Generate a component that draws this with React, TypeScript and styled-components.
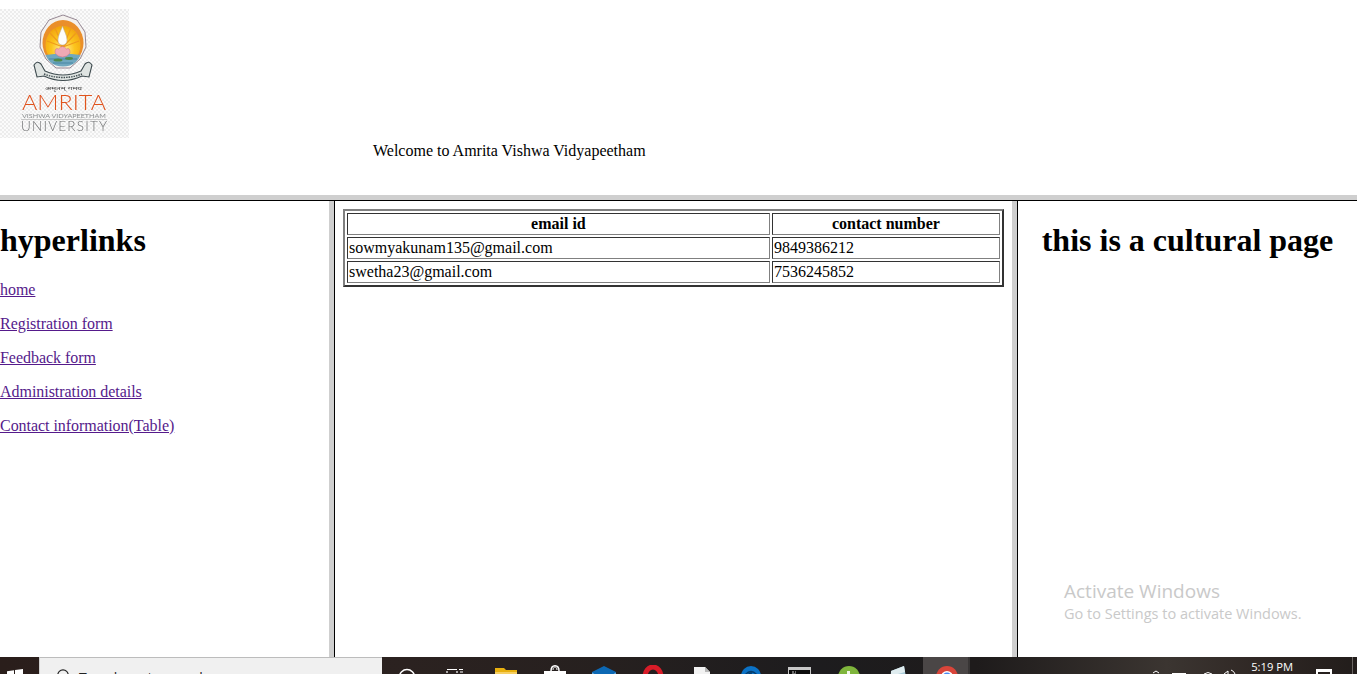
import React from 'react'
import styled, { createGlobalStyle } from 'styled-components'

const GlobalStyle = createGlobalStyle`
  html, body {
    margin: 0;
    height: 100%;
    overflow: hidden;
    background: #fff;
  }
  body {
    font-family: "Liberation Serif", "Times New Roman", serif;
    font-size: 16px;
    color: #000;
  }
`

const Page = styled.div`
  position: relative;
  display: flex;
  flex-direction: column;
  height: 674px;
  overflow: hidden;
`

const TopFrame = styled.header`
  height: 195px;
  padding-top: 9px;
  box-sizing: border-box;
  flex: none;
`

const Logo = styled.svg`
  display: block;
  width: 129px;
  height: 129px;
`

const Welcome = styled.div`
  margin-top: 4px;
  padding-left: 373px;
  line-height: 18px;
`

const HorizontalSplit = styled.div`
  flex: none;
  height: 5px;
  background: #cfcfcf;
  border-bottom: 1px solid #000;
`

const Frames = styled.div`
  flex: 1;
  min-height: 0;
  display: flex;
`

const LeftFrame = styled.nav`
  width: 329px;
  flex: none;
`

const CenterFrame = styled.main`
  flex: 1;
  min-width: 0;
  padding: 8px;
`

const RightFrame = styled.aside`
  width: 339px;
  flex: none;
  text-align: center;
`

const VerticalSplit = styled.div`
  flex: none;
  width: 5px;
  background: #cfcfcf;
  border-right: 1px solid #000;
`

const Heading = styled.h1`
  margin: 21.44px 0;
  font-size: 32px;
  line-height: 37px;
  font-weight: bold;
`

const LinkRow = styled.p`
  margin: 16px 0;
  line-height: 18px;
`

const PageLink = styled.a`
  color: #551a8b;
  text-decoration: underline;
  letter-spacing: -0.04px;
`

const ContactTable = styled.table`
  width: 100%;
  border-collapse: separate;
  border-spacing: 2px;
  border-style: solid;
  border-width: 2px;
  border-color: #808080 #333 #333 #808080;
`

const Cell = styled.td`
  padding: 1px;
  line-height: 18px;
  border-style: solid;
  border-width: 1px;
  border-color: #333 #808080 #808080 #333;
`

const HeadCell = styled(Cell).attrs({ as: 'th' })`
  font-weight: bold;
  text-align: center;
`

const Watermark = styled.div`
  position: absolute;
  left: 1064px;
  top: 579px;
  color: #c9c9c9;
  font-family: "Open Sans", "Noto Sans", sans-serif;
  pointer-events: none;
`

const WatermarkTitle = styled.div`
  font-size: 19px;
  line-height: 25px;
`

const WatermarkLine = styled.div`
  font-size: 14.5px;
  line-height: 20px;
`

const Taskbar = styled.footer`
  flex: none;
  height: 17px;
  display: flex;
  overflow: hidden;
  background: linear-gradient(90deg, #2a1e1b 0%, #2b2220 30%, #26201f 45%, #1d1c1e 60%, #1e1b1b 72%, #3b3531 86%, #2f2724 93%, #221d1b 100%);
`

const StartButton = styled.div`
  width: 39px;
  flex: none;
  padding: 12px 0 0 7px;
  box-sizing: border-box;
`

const SearchBox = styled.div`
  width: 343px;
  flex: none;
  display: flex;
  align-items: flex-start;
  gap: 9px;
  box-sizing: border-box;
  padding: 11px 0 0 16px;
  background: #f0f0f0;
  border-top: 1px solid #bcbcbc;
  border-left: 1px solid #d0d0d0;
`

const SearchText = styled.span`
  font-family: "Open Sans", "Noto Sans", sans-serif;
  font-size: 14px;
  line-height: 18px;
  margin-top: 0;
  color: #222;
`

const AppSlots = styled.div`
  display: flex;
  flex: none;
  margin-left: 1px;
`

const AppSlot = styled.div<{ $active?: boolean }>`
  width: 49px;
  flex: none;
  display: flex;
  justify-content: center;
  padding-top: 8px;
  background: ${p =>
    p.$active
      ? 'linear-gradient(90deg, transparent 0 1px, #4a4646 1px 46px, #383535 46px 48px, transparent 48px)'
      : 'transparent'};
`

const Tray = styled.div`
  flex: 1;
  display: flex;
  justify-content: flex-end;
  align-items: flex-start;
  color: #fff;
`

const TrayMark = styled.svg<{ $gap: number }>`
  flex: none;
  margin-right: ${p => p.$gap}px;
`

const Clock = styled.div`
  font-family: "Open Sans", "Noto Sans", sans-serif;
  font-size: 11.2px;
  line-height: 16px;
  margin: 2px 23px 0 0;
  white-space: nowrap;
`

const NotifyIcon = styled.div`
  width: 16px;
  height: 16px;
  margin: 12px 20px 0 0;
  box-sizing: border-box;
  border: 2px solid #fff;
  border-top-width: 3px;
`

const ShowDesktop = styled.div`
  width: 4px;
  height: 17px;
  border-left: 1px solid #6b6663;
`

const contacts = [
  { email: 'sowmyakunam135@gmail.com', phone: '9849386212' },
  { email: 'swetha23@gmail.com', phone: '7536245852' },
]

const links = ['home', 'Registration form', 'Feedback form', 'Administration details', 'Contact information(Table)']

const AmritaLogo = () => (
  <Logo viewBox="0 0 129 129">
    <defs>
      <pattern id="checks" width="4" height="4" patternUnits="userSpaceOnUse">
        <rect width="4" height="4" fill="#fbfbfb" />
        <rect width="2" height="2" fill="#ececec" />
        <rect x="2" y="2" width="2" height="2" fill="#ececec" />
      </pattern>
      <filter id="soft">
        <feGaussianBlur stdDeviation="0.35" />
      </filter>
      <radialGradient id="sun" cx="50%" cy="62%" r="60%">
        <stop offset="0" stopColor="#fff1a0" />
        <stop offset="0.55" stopColor="#fcc51e" />
        <stop offset="1" stopColor="#f2a60f" />
      </radialGradient>
    </defs>
    <rect width="129" height="129" fill="url(#checks)" />
    <g filter="url(#soft)">
      <path d="M63 6 L77 11 L85 23 L86 38 L80 50 L70 59 L56 59 L46 50 L40 38 L41 23 L49 11 Z" fill="#f4f1ee" stroke="#8a7a88" strokeWidth="0.9" />
      <ellipse cx="63" cy="34" rx="20.5" ry="23" fill="#ea8f2c" />
      <ellipse cx="63" cy="36" rx="17.5" ry="19" fill="url(#sun)" />
      <path d="M63 38 L50 24 M63 38 L55 19 M63 38 L71 19 M63 38 L76 24 M63 38 L47 32 M63 38 L79 32" stroke="#ef9a1c" strokeWidth="1.2" />
      <path d="M45.5 46 Q63 43 80.5 46 Q77 54 70 56.5 Q63 58.5 56 56.5 Q49 54 45.5 46 Z" fill="#6fa8bf" />
      <path d="M49 50 H77 M53 54 H73" stroke="#3f7f9e" strokeWidth="0.8" />
      <path d="M62.5 17 C61 22 58 26 58 31 C58 34.500 60 36 62.5 36 C65 36 67 34.500 67 31 C67 26 64 22 62.5 17 Z" fill="#fdfdfb" stroke="#b9a98e" strokeWidth="0.5" />
      <path d="M55 44 Q55 38 58.500 40 Q62.500 35 66.500 40 Q70 38 70 44 Q67 48 62.500 48 Q58 48 55 44 Z" fill="#efa9b4" stroke="#c86f82" strokeWidth="0.5" />
      <ellipse cx="58" cy="51" rx="4.500" ry="1.600" fill="#4f8a4a" />
      <ellipse cx="69" cy="49.500" rx="4" ry="1.400" fill="#4f8a4a" />
      <path d="M34 56 Q37 51 41 55 L45 62 Q63 70 81 62 L85 55 Q89 51 92 56 L89 68 L82 67 Q63 76 44 67 L37 68 Z" fill="#dfe4e2" stroke="#3f4c50" strokeWidth="1.1" />
      <path d="M44 65 Q63 72 82 65" fill="none" stroke="#3f4c50" strokeWidth="1.4" strokeDasharray="1.500 1" />
      <text x="63.500" y="81" textAnchor="middle" fontFamily="'Noto Sans', sans-serif" fontSize="5" textLength="37" lengthAdjust="spacingAndGlyphs" fill="#444">अमृतम् गमय</text>
      <text x="64" y="101" textAnchor="middle" fontFamily="Lato, sans-serif" fontWeight="300" fontSize="21" textLength="84" lengthAdjust="spacingAndGlyphs" fill="#e0521f">AMRITA</text>
      <text x="64" y="108.500" textAnchor="middle" fontFamily="Lato, sans-serif" fontWeight="400" fontSize="6" textLength="84" lengthAdjust="spacingAndGlyphs" fill="#8c8f90">VISHWA VIDYAPEETHAM</text>
      <rect x="21" y="110" width="86" height="0.700" fill="#b5b5b5" />
      <text x="64" y="122" textAnchor="middle" fontFamily="Lato, sans-serif" fontWeight="300" fontSize="13.500" textLength="86" fill="#6f7172">UNIVERSITY</text>
    </g>
  </Logo>
)

const WindowsMark = () => (
  <svg width="16" height="16" viewBox="0 0 16 16">
    <path d="M0 2.2 L7 1.2 V7.4 H0 Z M8 1 L16 0 V7.4 H8 Z M0 8.4 H7 V14.6 L0 13.6 Z M8 8.4 H16 V16 L8 14.8 Z" fill="#fff" />
  </svg>
)

const SearchMark = () => (
  <svg width="14" height="14" viewBox="0 0 14 14" style={{ flex: 'none' }}>
    <circle cx="7" cy="6" r="5.2" fill="none" stroke="#222" strokeWidth="1.2" />
    <path d="M3.4 9.8 L0.6 13.2" stroke="#222" strokeWidth="1.2" />
  </svg>
)

const icons: React.ReactNode[] = [
  <svg key="cortana" width="24" height="24" viewBox="0 0 24 24">
    <circle cx="11" cy="12" r="7.500" fill="none" stroke="#fff" strokeWidth="1.600" />
  </svg>,
  <svg key="taskview" width="24" height="24" viewBox="0 0 24 24">
    <path d="M2 4.500 H12 M2 6 V8 M12 6 V8 M14 4.500 H18 M15 7 H18" stroke="#fff" strokeWidth="1.200" fill="none" />
  </svg>,
  <svg key="folder" width="22" height="24" viewBox="0 0 22 24">
    <path d="M0 3 H9 L11 5 H22 V24 H0 Z" fill="#e8b00f" />
    <rect x="0" y="7" width="22" height="17" fill="#f6cf62" />
  </svg>,
  <svg key="store" width="24" height="24" viewBox="0 0 24 24">
    <path d="M8 6 C8 -1 16 -1 16 6" fill="none" stroke="#fff" strokeWidth="1.500" />
    <path d="M10 5 C10 1 14 1 14 5" fill="none" stroke="#fff" strokeWidth="1" />
    <rect x="1" y="6" width="22" height="18" fill="#fff" />
  </svg>,
  <svg key="mail" width="24" height="24" viewBox="0 0 24 24">
    <path d="M0 7 L12 1 L24 7 V24 H0 Z" fill="#0c68b4" />
    <path d="M0 7.500 L12 15 L24 7.500 V8.500 L12 16 L0 8.500 Z" fill="#7ab8e6" />
  </svg>,
  <svg key="opera" width="24" height="24" viewBox="0 0 24 24">
    <ellipse cx="12" cy="12" rx="8" ry="10" fill="none" stroke="#d81c28" strokeWidth="5" />
  </svg>,
  <svg key="doc" width="24" height="24" viewBox="0 0 24 24">
    <path d="M4 2 H15 L20 7 V24 H4 Z" fill="#f2f2f2" />
    <path d="M15 2 L20 7 H15 Z" fill="#b8b8b8" />
  </svg>,
  <svg key="edge" width="24" height="24" viewBox="0 0 24 24">
    <circle cx="12" cy="11" r="10" fill="#0b72c6" />
    <path d="M6 10 Q12 3 18 10 L18 12 L8 12 Q9 8 13 8" fill="none" stroke="#053c6c" strokeWidth="1.400" />
  </svg>,
  <svg key="cmd" width="24" height="24" viewBox="0 0 24 24">
    <rect x="0.500" y="2.500" width="22" height="21" fill="#0c0c0c" stroke="#c8c8c8" strokeWidth="1" />
    <rect x="1" y="2" width="21" height="3" fill="#c8c8c8" />
    <path d="M4 7 H6 M7 7 H8 M4 9 H8" stroke="#ccc" strokeWidth="1" />
  </svg>,
  <svg key="green" width="24" height="24" viewBox="0 0 24 24">
    <circle cx="12" cy="12" r="11" fill="#7fb53c" />
    <path d="M10 6 H13 V9 H17 V11 H6 V9 H10 Z" fill="#f3f7ea" />
  </svg>,
  <svg key="paper" width="24" height="24" viewBox="0 0 24 24">
    <path d="M5 6 L18 1 L21 18 L4 22 Z" fill="#a9cbd8" />
    <path d="M5 6 L18 1 L19 7 L5 11 Z" fill="#dfecef" />
  </svg>,
  <svg key="chrome" width="24" height="24" viewBox="0 0 24 24">
    <circle cx="12" cy="12" r="11" fill="#d9453a" />
    <path d="M1 12 A11 11 0 0 0 12 23 L12 12 Z" fill="#3a9a50" />
    <path d="M23 12 A11 11 0 0 1 12 23 L12 12 Z" fill="#f2c53c" />
    <circle cx="12" cy="12" r="6" fill="#fff" />
    <circle cx="12" cy="12" r="4.500" fill="#4a8af0" />
  </svg>,
]

export default function App() {
  return (
    <Page>
      <GlobalStyle />
      <TopFrame>
        <AmritaLogo />
        <Welcome>Welcome to Amrita Vishwa Vidyapeetham</Welcome>
      </TopFrame>
      <HorizontalSplit />
      <Frames>
        <LeftFrame>
          <Heading>hyperlinks</Heading>
          {links.map(label => (
            <LinkRow key={label}>
              <PageLink href="#">{label}</PageLink>
            </LinkRow>
          ))}
        </LeftFrame>
        <VerticalSplit />
        <CenterFrame>
          <ContactTable>
            <thead>
              <tr>
                <HeadCell>email id</HeadCell>
                <HeadCell>contact number</HeadCell>
              </tr>
            </thead>
            <tbody>
              {contacts.map(row => (
                <tr key={row.email}>
                  <Cell>{row.email}</Cell>
                  <Cell>{row.phone}</Cell>
                </tr>
              ))}
            </tbody>
          </ContactTable>
        </CenterFrame>
        <VerticalSplit />
        <RightFrame>
          <Heading>this is a cultural page</Heading>
        </RightFrame>
      </Frames>
      <Taskbar>
        <StartButton>
          <WindowsMark />
        </StartButton>
        <SearchBox>
          <SearchMark />
          <SearchText>Type here to search</SearchText>
        </SearchBox>
        <AppSlots>
          {icons.map((icon, i) => (
            <AppSlot key={i} $active={i === icons.length - 1}>
              {icon}
            </AppSlot>
          ))}
        </AppSlots>
        <Tray>
          <TrayMark $gap={12} width="8" height="17" viewBox="0 0 8 17">
            <path d="M1 16 L4 14 L7 16" stroke="#fff" fill="none" />
          </TrayMark>
          <TrayMark $gap={15} width="14" height="17" viewBox="0 0 14 17">
            <rect x="0" y="16" width="14" height="1" fill="#fff" />
          </TrayMark>
          <TrayMark $gap={6} width="14" height="17" viewBox="0 0 14 17">
            <path d="M3 17 Q7 14 11 17" stroke="#fff" fill="none" />
          </TrayMark>
          <TrayMark $gap={14} width="16" height="17" viewBox="0 0 16 17">
            <path d="M3 17 L7 14 V17 M10 13 Q13 14 14 17" stroke="#fff" fill="none" />
          </TrayMark>
          <Clock>5:19 PM</Clock>
          <NotifyIcon />
          <ShowDesktop />
        </Tray>
      </Taskbar>
      <Watermark>
        <WatermarkTitle>Activate Windows</WatermarkTitle>
        <WatermarkLine>Go to Settings to activate Windows.</WatermarkLine>
      </Watermark>
    </Page>
  )
}
